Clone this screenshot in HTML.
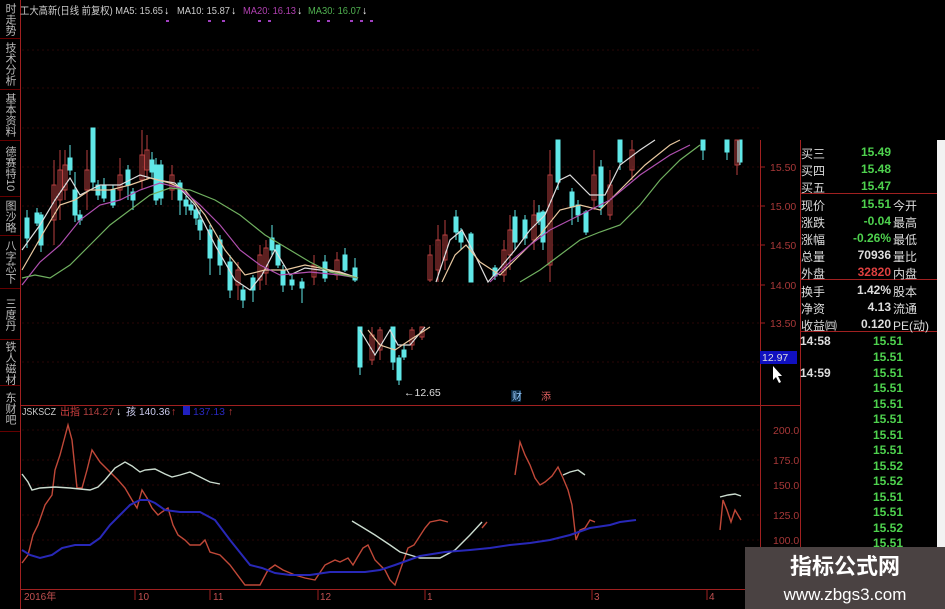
<!DOCTYPE html>
<html><head><meta charset="utf-8"><style>
body{margin:0;width:945px;height:609px;overflow:hidden;background:#000;font-family:"Liberation Sans","Noto Sans CJK SC",sans-serif;}
.abs{position:absolute}
.side{position:absolute;left:0;width:20px;background:#000;color:#bbb;font-size:11px;writing-mode:vertical-rl;text-align:center;line-height:20px;border-bottom:1px solid #600}
.rp{position:absolute;left:800px;width:137px;font-size:12px;color:#ddd;font-family:"Liberation Sans","Noto Sans CJK SC",sans-serif}
.row{position:absolute;left:0;width:137px;height:16px}
.row .k{position:absolute;left:1px}
.row .v{position:absolute;right:46px;color:#4ed24e;font-weight:bold}
.row .k2{position:absolute;left:93px}
.t{position:absolute;left:0;color:#ddd;font-weight:bold}
.tv{position:absolute;left:73px;color:#4ed24e;font-weight:bold}
</style></head><body>
<svg class="abs" style="left:0;top:0" width="945" height="609">
<rect x="937" y="140" width="8" height="469" fill="#f2f2f2"/>
<line x1="20.5" y1="0" x2="20.5" y2="609" stroke="#a02020"/>
<line x1="760.5" y1="140" x2="760.5" y2="609" stroke="#a02020"/>
<line x1="800.5" y1="140" x2="800.5" y2="609" stroke="#a02020"/>
<line x1="20" y1="405.5" x2="800" y2="405.5" stroke="#a02020"/>
<line x1="20" y1="589.5" x2="800" y2="589.5" stroke="#a02020"/>
<line x1="800" y1="193.5" x2="937" y2="193.5" stroke="#a02020"/>
<line x1="800" y1="279.5" x2="937" y2="279.5" stroke="#a02020"/>
<line x1="800" y1="331.5" x2="937" y2="331.5" stroke="#a02020"/>
<g stroke="#2a0606" stroke-dasharray="2,3">
<line x1="22" y1="50" x2="760" y2="50"/><line x1="22" y1="88" x2="760" y2="88"/><line x1="22" y1="128" x2="760" y2="128"/><line x1="22" y1="167" x2="760" y2="167"/><line x1="22" y1="206" x2="760" y2="206"/><line x1="22" y1="245" x2="760" y2="245"/><line x1="22" y1="285" x2="760" y2="285"/><line x1="22" y1="323" x2="760" y2="323"/><line x1="22" y1="362" x2="760" y2="362"/>
<line x1="22" y1="430" x2="760" y2="430"/><line x1="22" y1="460" x2="760" y2="460"/><line x1="22" y1="485" x2="760" y2="485"/><line x1="22" y1="515" x2="760" y2="515"/><line x1="22" y1="540" x2="760" y2="540"/>
</g>
<g fill="#a83838" font-size="10.5" font-family="Liberation Sans">
<text x="770" y="171">15.50</text><text x="770" y="210">15.00</text><text x="770" y="249">14.50</text><text x="770" y="289">14.00</text><text x="770" y="327">13.50</text>
<text x="773" y="434">200.0</text><text x="773" y="464">175.0</text><text x="773" y="489">150.0</text><text x="773" y="519">125.0</text><text x="773" y="544">100.0</text>
</g>
<g stroke="#a02020"><line x1="760" y1="167" x2="765" y2="167"/><line x1="760" y1="206" x2="765" y2="206"/><line x1="760" y1="245" x2="765" y2="245"/><line x1="760" y1="285" x2="765" y2="285"/><line x1="760" y1="323" x2="765" y2="323"/></g>
<rect x="760" y="351" width="37" height="13" fill="#1010c0"/>
<text x="762" y="361" fill="#ddd" font-size="10.5">12.97</text>
<path d="M773 366 L773 380 L776 377 L779 383 L781 382 L778 376 L782 376 Z" fill="#fff"/>
<g stroke-width="1">
<g stroke="#60e8e8" fill="#60e8e8">
<line x1="27" y1="210" x2="27" y2="248"/><rect x="25" y="218" width="4" height="20"/>
<line x1="37" y1="208" x2="37" y2="226"/><rect x="35" y="213" width="4" height="10"/>
<line x1="41" y1="212" x2="41" y2="252"/><rect x="39" y="215" width="4" height="30"/>
<line x1="70" y1="145" x2="70" y2="175"/><rect x="68" y="158" width="4" height="12"/>
<line x1="75" y1="172" x2="75" y2="222"/><rect x="73" y="190" width="4" height="25"/>
<line x1="80" y1="210" x2="80" y2="225"/><rect x="78" y="215" width="4" height="5"/>
<line x1="93" y1="128" x2="93" y2="188"/><rect x="91" y="128" width="4" height="54"/>
<line x1="98" y1="180" x2="98" y2="200"/><rect x="96" y="185" width="4" height="10"/>
<line x1="104" y1="178" x2="104" y2="202"/><rect x="102" y="185" width="4" height="13"/>
<line x1="113" y1="185" x2="113" y2="208"/><rect x="111" y="190" width="4" height="15"/>
<line x1="128" y1="165" x2="128" y2="200"/><rect x="126" y="170" width="4" height="15"/>
<line x1="133" y1="188" x2="133" y2="210"/><rect x="131" y="192" width="4" height="8"/>
<line x1="152" y1="152" x2="152" y2="178"/><rect x="150" y="160" width="4" height="12"/>
<line x1="156" y1="158" x2="156" y2="205"/><rect x="154" y="165" width="4" height="35"/>
<line x1="161" y1="160" x2="161" y2="205"/><rect x="159" y="165" width="4" height="33"/>
<line x1="180" y1="180" x2="180" y2="215"/><rect x="178" y="183" width="4" height="17"/>
<line x1="186" y1="196" x2="186" y2="215"/><rect x="184" y="200" width="4" height="6"/>
<line x1="191" y1="200" x2="191" y2="215"/><rect x="189" y="205" width="4" height="5"/>
<line x1="196" y1="208" x2="196" y2="225"/><rect x="194" y="210" width="4" height="8"/>
<line x1="200" y1="210" x2="200" y2="240"/><rect x="198" y="220" width="4" height="10"/>
<line x1="210" y1="225" x2="210" y2="275"/><rect x="208" y="230" width="4" height="28"/>
<line x1="220" y1="235" x2="220" y2="275"/><rect x="218" y="240" width="4" height="25"/>
<line x1="230" y1="255" x2="230" y2="298"/><rect x="228" y="262" width="4" height="28"/>
<line x1="243" y1="286" x2="243" y2="308"/><rect x="241" y="290" width="4" height="10"/>
<line x1="253" y1="275" x2="253" y2="302"/><rect x="251" y="278" width="4" height="12"/>
<line x1="272" y1="225" x2="272" y2="255"/><rect x="270" y="238" width="4" height="12"/>
<line x1="278" y1="245" x2="278" y2="268"/><rect x="276" y="245" width="4" height="20"/>
<line x1="283" y1="265" x2="283" y2="292"/><rect x="281" y="270" width="4" height="15"/>
<line x1="292" y1="275" x2="292" y2="290"/><rect x="290" y="280" width="4" height="5"/>
<line x1="302" y1="278" x2="302" y2="303"/><rect x="300" y="282" width="4" height="6"/>
<line x1="325" y1="255" x2="325" y2="282"/><rect x="323" y="262" width="4" height="16"/>
<line x1="345" y1="248" x2="345" y2="272"/><rect x="343" y="255" width="4" height="15"/>
<line x1="355" y1="258" x2="355" y2="282"/><rect x="353" y="268" width="4" height="12"/>
<line x1="360" y1="327" x2="360" y2="375"/><rect x="358" y="327" width="4" height="40"/>
<line x1="393" y1="327" x2="393" y2="370"/><rect x="391" y="327" width="4" height="35"/>
<line x1="399" y1="355" x2="399" y2="385"/><rect x="397" y="358" width="4" height="22"/>
<line x1="404" y1="345" x2="404" y2="360"/><rect x="402" y="350" width="4" height="7"/>
<line x1="456" y1="210" x2="456" y2="240"/><rect x="454" y="217" width="4" height="15"/>
<line x1="461" y1="228" x2="461" y2="250"/><rect x="459" y="232" width="4" height="10"/>
<line x1="471" y1="232" x2="471" y2="282"/><rect x="469" y="234" width="4" height="48"/>
<line x1="495" y1="265" x2="495" y2="280"/><rect x="493" y="268" width="4" height="8"/>
<line x1="515" y1="210" x2="515" y2="250"/><rect x="513" y="217" width="4" height="25"/>
<line x1="525" y1="215" x2="525" y2="245"/><rect x="523" y="220" width="4" height="18"/>
<line x1="539" y1="205" x2="539" y2="225"/><rect x="537" y="213" width="4" height="8"/>
<line x1="543" y1="210" x2="543" y2="250"/><rect x="541" y="212" width="4" height="30"/>
<line x1="558" y1="140" x2="558" y2="190"/><rect x="556" y="140" width="4" height="42"/>
<line x1="572" y1="188" x2="572" y2="225"/><rect x="570" y="192" width="4" height="15"/>
<line x1="578" y1="200" x2="578" y2="222"/><rect x="576" y="205" width="4" height="10"/>
<line x1="586" y1="210" x2="586" y2="235"/><rect x="584" y="212" width="4" height="20"/>
<line x1="601" y1="160" x2="601" y2="215"/><rect x="599" y="167" width="4" height="40"/>
<line x1="620" y1="140" x2="620" y2="170"/><rect x="618" y="140" width="4" height="22"/>
<line x1="703" y1="140" x2="703" y2="160"/><rect x="701" y="140" width="4" height="10"/>
<line x1="727" y1="140" x2="727" y2="160"/><rect x="725" y="140" width="4" height="12"/>
<line x1="740" y1="140" x2="740" y2="165"/><rect x="738" y="140" width="4" height="22"/>
</g>
<g stroke="#b84040" fill="none">
<rect x="52" y="185" width="4" height="35"/><line x1="54" y1="160" x2="54" y2="245"/>
<rect x="58" y="170" width="4" height="30"/><line x1="60" y1="150" x2="60" y2="220"/>
<rect x="63" y="165" width="4" height="25"/><line x1="65" y1="150" x2="65" y2="200"/>
<rect x="85" y="170" width="4" height="20"/><line x1="87" y1="150" x2="87" y2="210"/>
<rect x="118" y="175" width="4" height="15"/><line x1="120" y1="158" x2="120" y2="200"/>
<rect x="140" y="155" width="4" height="25"/><line x1="142" y1="130" x2="142" y2="190"/>
<rect x="145" y="150" width="4" height="20"/><line x1="147" y1="135" x2="147" y2="180"/>
<rect x="170" y="175" width="4" height="15"/><line x1="172" y1="165" x2="172" y2="200"/>
<rect x="236" y="270" width="4" height="15"/><line x1="238" y1="262" x2="238" y2="300"/>
<rect x="258" y="255" width="4" height="25"/><line x1="260" y1="245" x2="260" y2="290"/>
<rect x="264" y="248" width="4" height="25"/><line x1="266" y1="240" x2="266" y2="285"/>
<rect x="312" y="265" width="4" height="12"/><line x1="314" y1="255" x2="314" y2="285"/>
<rect x="335" y="260" width="4" height="15"/><line x1="337" y1="252" x2="337" y2="280"/>
<rect x="370" y="335" width="4" height="25"/><line x1="372" y1="327" x2="372" y2="365"/>
<rect x="378" y="330" width="4" height="20"/><line x1="380" y1="327" x2="380" y2="360"/>
<rect x="410" y="330" width="4" height="15"/><line x1="412" y1="327" x2="412" y2="350"/>
<rect x="420" y="327" width="4" height="10"/><line x1="422" y1="327" x2="422" y2="340"/>
<rect x="428" y="255" width="4" height="25"/><line x1="430" y1="245" x2="430" y2="282"/>
<rect x="436" y="240" width="4" height="30"/><line x1="438" y1="225" x2="438" y2="282"/>
<rect x="443" y="235" width="4" height="25"/><line x1="445" y1="220" x2="445" y2="270"/>
<rect x="502" y="250" width="4" height="25"/><line x1="504" y1="240" x2="504" y2="282"/>
<rect x="508" y="230" width="4" height="25"/><line x1="510" y1="215" x2="510" y2="270"/>
<rect x="532" y="215" width="4" height="25"/><line x1="534" y1="200" x2="534" y2="250"/>
<rect x="548" y="175" width="4" height="90"/><line x1="550" y1="150" x2="550" y2="282"/>
<rect x="592" y="175" width="4" height="25"/><line x1="594" y1="150" x2="594" y2="210"/>
<rect x="608" y="185" width="4" height="30"/><line x1="610" y1="170" x2="610" y2="220"/>
<rect x="630" y="150" width="4" height="20"/><line x1="632" y1="140" x2="632" y2="180"/>
<rect x="735" y="140" width="4" height="25"/><line x1="737" y1="140" x2="737" y2="175"/>
</g>
</g>
<g fill="none" stroke-width="1.2">
<polyline stroke="#ddd" points="22,250 40,225 55,200 70,178 80,195 100,185 120,185 140,175 158,180 175,183 195,205 215,245 235,280 250,290 262,275 275,250 290,275 305,268 320,270 340,272 358,278"/>
<polyline stroke="#ddd" points="360,330 375,355 390,330 398,345 410,345 425,327"/>
<polyline stroke="#ddd" points="436,282 450,240 462,230 475,255 488,282 500,268 515,250 530,230 545,215 560,180 570,175 590,195 605,195 620,165 640,150 655,140"/>
<polyline stroke="#e8c8a0" points="22,270 45,230 60,205 75,200 90,190 110,190 130,185 150,178 170,183 185,190 205,215 225,250 245,275 265,270 285,270 305,265 330,270 358,278"/>
<polyline stroke="#e8c8a0" points="368,330 380,345 395,350 410,340 430,327"/>
<polyline stroke="#e8c8a0" points="442,282 455,255 466,245 480,262 500,275 520,255 540,235 560,210 580,205 600,210 620,190 645,165 670,145 680,140"/>
<polyline stroke="#b050b0" points="22,285 40,262 60,245 80,220 100,205 120,200 140,190 160,183 180,188 200,205 220,225 240,250 260,265 280,275 310,272 340,275 358,278"/>
<polyline stroke="#b050b0" points="490,282 510,262 530,245 550,230 570,220 590,210 610,200 640,175 670,155 690,145"/>
<polyline stroke="#70b060" points="22,278 35,275 50,278 70,265 90,245 110,225 130,210 150,195 170,188 190,190 215,200 240,215 265,235 290,250 310,262 330,272 358,278"/>
<polyline stroke="#70b060" points="520,282 540,270 560,255 580,240 600,232 620,225 640,205 660,180 680,160 700,145"/>
</g>
<text x="404" y="396" fill="#ddd" font-size="10.5">←12.65</text>
<rect x="511" y="390" width="10" height="12" fill="#0a2840"/><text x="512" y="400" fill="#9cf" font-size="10">财</text>
<text x="541" y="400" fill="#e06060" font-size="10">添</text>
<g fill="none" stroke-width="1.4">
<polyline stroke="#c04838" points="22,563 28,555 33,535 38,525 45,505 52,495 55,470 60,455 64,440 68,425 72,440 77,488 82,488 87,470 92,450 100,462 110,472 118,480 125,488 132,500 137,508 142,490 147,498 152,508 158,515 162,512 168,508 173,525 178,535 185,540 190,545 200,545 205,540 210,552 220,555 230,565 245,585 260,585 268,570 275,565 283,570 295,575 305,578 315,580 325,565 335,560 340,562 348,558 353,565 357,558 363,548 368,545 375,560 385,570 390,580 395,585 402,565 408,548 414,545 425,528 430,522 440,520 448,522"/>
<polyline stroke="#c04838" points="482,528 487,522"/>
<polyline stroke="#c04838" points="515,475 520,442 525,455 530,465 535,478 540,485 545,482 552,476 558,467 563,478 568,490 572,505 576,540 580,530 585,528 590,520 595,522"/>
<polyline stroke="#c04838" points="720,530 723,500 727,510 731,522 735,510 741,520"/>
<polyline stroke="#ccddd0" points="22,474 28,482 32,490 40,488 55,487 70,488 90,490 98,487 105,480 115,468 125,462 132,466 140,472 145,470 155,469 165,474 172,477 180,475 190,472 200,477 210,482 220,484"/>
<polyline stroke="#ccddd0" points="352,521 362,527 375,535 390,545 400,552 410,555 420,558 430,558 440,558 455,550 470,535 482,522"/>
<polyline stroke="#ccddd0" points="563,475 570,472 578,470 585,475"/>
<polyline stroke="#ccddd0" points="720,497 728,495 735,494 741,496"/>
<polyline stroke="#2828b8" stroke-width="2" points="22,550 30,555 40,558 52,555 62,548 75,545 90,545 100,538 110,525 120,515 130,505 140,500 148,500 155,503 165,510 180,512 200,512 215,520 230,540 250,565 262,568 275,573 290,575 310,575 330,572 350,572 365,572 380,570 395,565 420,556 445,552 470,550 490,548 510,545 530,543 550,540 570,535 590,528 610,525 620,522 636,520"/>
</g>
<g fill="#c05050" font-size="10"><text x="24" y="600">2016年</text><text x="138" y="600">10</text><text x="213" y="600">11</text><text x="320" y="600">12</text><text x="427" y="600">1</text><text x="594" y="600">3</text><text x="709" y="600">4</text></g>
<g stroke="#a02020"><line x1="135" y1="589" x2="135" y2="600"/><line x1="210" y1="589" x2="210" y2="600"/><line x1="318" y1="589" x2="318" y2="600"/><line x1="425" y1="589" x2="425" y2="600"/><line x1="592" y1="589" x2="592" y2="600"/><line x1="707" y1="589" x2="707" y2="600"/></g>
<g font-size="10.5" font-family="Liberation Sans, Noto Sans CJK SC, sans-serif" lengthAdjust="spacingAndGlyphs">
<text x="20" y="14" fill="#ccc" textLength="143" lengthAdjust="spacingAndGlyphs">工大高新(日线 前复权) MA5: 15.65</text><text x="164" y="14" fill="#fff">↓</text>
<text x="177" y="14" fill="#ccc" textLength="53" lengthAdjust="spacingAndGlyphs">MA10: 15.87</text><text x="231" y="14" fill="#fff">↓</text>
<text x="243" y="14" fill="#b040b0" textLength="53" lengthAdjust="spacingAndGlyphs">MA20: 16.13</text><text x="297" y="14" fill="#fff">↓</text>
<text x="308" y="14" fill="#50b050" textLength="53" lengthAdjust="spacingAndGlyphs">MA30: 16.07</text><text x="362" y="14" fill="#fff">↓</text>
<text x="22" y="415" fill="#ccc" textLength="34" lengthAdjust="spacingAndGlyphs">JSKSCZ</text><text x="60" y="415" fill="#d04040" textLength="20" lengthAdjust="spacingAndGlyphs">出指</text><text x="83" y="415" fill="#b04040" textLength="31" lengthAdjust="spacingAndGlyphs">114.27</text><text x="116" y="415" fill="#fff">↓</text>
<text x="126" y="415" fill="#cce" textLength="44" lengthAdjust="spacingAndGlyphs">孩 140.36</text><text x="171" y="415" fill="#d04040">↑</text>
<rect x="183" y="406" width="7" height="9" fill="#2020c0"/><text x="193" y="415" fill="#2828c0" textLength="32" lengthAdjust="spacingAndGlyphs">137.13</text><text x="228" y="415" fill="#d04040">↑</text>
</g>
<g fill="#a040c0"><rect x="166" y="20" width="3" height="2"/><rect x="208" y="20" width="3" height="2"/><rect x="222" y="20" width="3" height="2"/><rect x="258" y="20" width="3" height="2"/><rect x="268" y="20" width="3" height="2"/><rect x="317" y="20" width="3" height="2"/><rect x="327" y="20" width="3" height="2"/><rect x="350" y="20" width="3" height="2"/><rect x="360" y="20" width="3" height="2"/><rect x="370" y="20" width="3" height="2"/></g>
<rect x="745" y="547" width="200" height="62" fill="#4a4242"/>
<text x="845" y="574" fill="#fff" font-size="22" font-weight="bold" text-anchor="middle" font-family="Noto Sans CJK SC, sans-serif">指标公式网</text>
<text x="845" y="600" fill="#fff" font-size="17" text-anchor="middle" font-family="Liberation Sans, sans-serif">www.zbgs3.com</text>
</svg>
<div class="side" style="top:0;height:38px">时走势</div>
<div class="side" style="top:39px;height:50px">技术分析</div>
<div class="side" style="top:90px;height:50px">基本资料</div>
<div class="side" style="top:141px;height:55px">德赛特10</div>
<div class="side" style="top:197px;height:38px">图沙略</div>
<div class="side" style="top:236px;height:52px">八字芯下载</div>
<div class="side" style="top:289px;height:50px">三度丹</div>
<div class="side" style="top:340px;height:45px">铁人磁材</div>
<div class="side" style="top:386px;height:45px">东财吧</div>
<div class="rp" style="top:145px;height:464px">
<div class="row" style="top:0"><span class="k">买三</span><span class="v">15.49</span></div>
<div class="row" style="top:17px"><span class="k">买四</span><span class="v">15.48</span></div>
<div class="row" style="top:34px"><span class="k">买五</span><span class="v">15.47</span></div>
<div class="row" style="top:52px"><span class="k">现价</span><span class="v">15.51</span><span class="k2">今开</span></div>
<div class="row" style="top:69px"><span class="k">涨跌</span><span class="v">-0.04</span><span class="k2">最高</span></div>
<div class="row" style="top:86px"><span class="k">涨幅</span><span class="v">-0.26%</span><span class="k2">最低</span></div>
<div class="row" style="top:103px"><span class="k">总量</span><span class="v" style="color:#ddd">70936</span><span class="k2">量比</span></div>
<div class="row" style="top:120px"><span class="k">外盘</span><span class="v" style="color:#e04040">32820</span><span class="k2">内盘</span></div>
<div class="row" style="top:138px"><span class="k">换手</span><span class="v" style="color:#ddd">1.42%</span><span class="k2">股本</span></div>
<div class="row" style="top:155px"><span class="k">净资</span><span class="v" style="color:#ddd">4.13</span><span class="k2">流通</span></div>
<div class="row" style="top:172px"><span class="k">收益㈣</span><span class="v" style="color:#ddd">0.120</span><span class="k2">PE(动)</span></div>
<div class="t" style="top:189px">14:58</div><div class="tv" style="top:189px">15.51</div>
<div class="tv" style="top:205px">15.51</div>
<div class="t" style="top:221px">14:59</div><div class="tv" style="top:221px">15.51</div>
<div class="tv" style="top:236px">15.51</div><div class="tv" style="top:252px">15.51</div><div class="tv" style="top:267px">15.51</div><div class="tv" style="top:283px">15.51</div><div class="tv" style="top:298px">15.51</div><div class="tv" style="top:314px">15.52</div><div class="tv" style="top:329px">15.52</div><div class="tv" style="top:345px">15.51</div><div class="tv" style="top:360px">15.51</div><div class="tv" style="top:376px">15.52</div><div class="tv" style="top:391px">15.51</div>
</div>
</body></html>
